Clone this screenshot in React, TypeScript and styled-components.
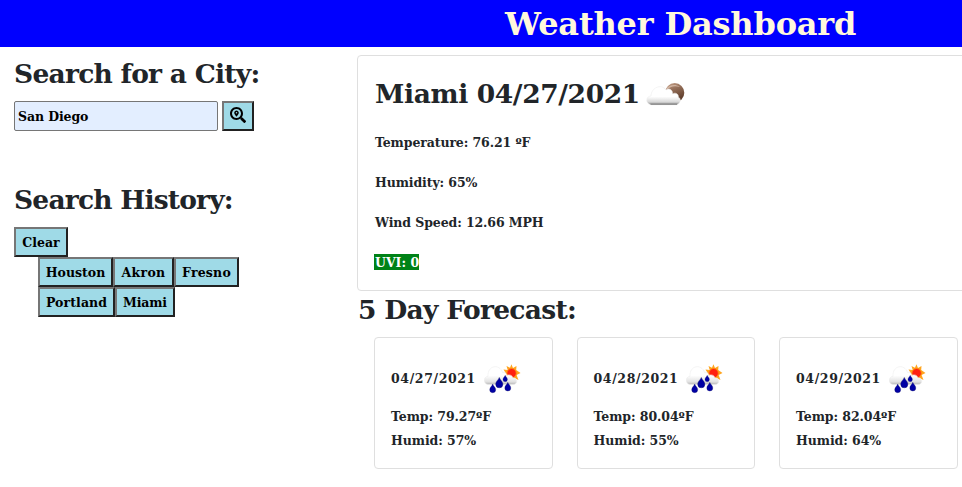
import React from "react";
import styled, { createGlobalStyle } from "styled-components";
import { FaSearchLocation } from "react-icons/fa";

const GlobalStyle = createGlobalStyle`
  *, *::before, *::after { box-sizing: border-box; }
  html, body { margin: 0; overflow: hidden; background: #fff; }
  body, button, input {
    font-family: "DejaVu Serif", "Bitstream Vera Serif", serif;
    font-weight: 700;
    font-size: 12.5px;
    line-height: 24px;
    white-space: nowrap;
  }
  body { color: #212529; }
`;

const Page = styled.div`
  width: 962px;
  height: 487px;
  overflow: hidden;
`;

const Header = styled.header`
  height: 47px;
  background: #0000ff;
  color: #fff8dc;
  padding-left: 505px;
`;

const Title = styled.h1`
  margin: 0;
  font-size: 32px;
  line-height: 48px;
  letter-spacing: -0.18px;
`;

const Columns = styled.div`
  display: flex;
`;

const Sidebar = styled.aside`
  flex: 0 0 357px;
  padding: 8px 0 0 14px;
`;

const Main = styled.main`
  flex: 0 0 641px;
  padding-top: 8px;
`;

const Heading = styled.h2<{ $spacing: number }>`
  margin: 0;
  font-size: 26.5px;
  line-height: 38px;
  letter-spacing: ${(p) => p.$spacing}px;
`;

const SearchForm = styled.div`
  display: flex;
  gap: 4px;
  margin: 8px 0 50px;
`;

const CityInput = styled.input`
  width: 204px;
  height: 30px;
  padding: 1px 3px;
  border: 1px solid #767676;
  border-radius: 2px;
  background: #e3eeff;
  color: #000;
  letter-spacing: -0.1px;
  outline: none;
`;

const Button = styled.button<{ $width: number; $spacing?: number }>`
  display: flex;
  align-items: center;
  justify-content: center;
  flex: none;
  width: ${(p) => p.$width}px;
  height: 30px;
  padding: 1px 0 0;
  border: 2px solid;
  border-color: #767676 #212121 #212121 #767676;
  background: #9fdae7;
  color: #000;
  letter-spacing: ${(p) => p.$spacing ?? 0}px;
`;

const SearchIcon = styled(FaSearchLocation)`
  width: 16px;
  height: 16px;
  margin-top: -3px;
`;

const ClearRow = styled.div`
  margin-top: 8px;
`;

const History = styled.div`
  display: flex;
  flex-wrap: wrap;
  width: 202px;
  margin-left: 24px;
`;

const Card = styled.section`
  border: 1px solid #dfdfdf;
  border-radius: 4px;
  background: #fff;
`;

const CurrentCard = styled(Card)`
  height: 236px;
  padding: 16px 16px 16px 17px;
`;

const CurrentTitle = styled.div`
  display: flex;
  align-items: flex-start;
  height: 46px;
  margin-bottom: 13px;
  padding-top: 3px;
  gap: 8px;
`;

const Reading = styled.p`
  margin: 0 0 16px;
  letter-spacing: -0.1px;
`;

const UvBadge = styled.span`
  display: block;
  width: 45px;
  height: 16px;
  margin: 19px 0 0 -1px;
  padding-left: 1px;
  line-height: 17px;
  background: #008217;
  color: #fff;
`;

const ForecastHeading = styled(Heading)`
  padding-left: 1px;
`;

const Forecast = styled.div`
  display: flex;
  gap: 24px;
  margin: 8px 0 0 17px;
`;

const DayCard = styled(Card)`
  flex: 0 0 178.5px;
  height: 132px;
  padding: 16px;
`;

const DayTitle = styled.div`
  display: flex;
  align-items: center;
  height: 50px;
  margin-bottom: 1px;
  gap: 8px;
  letter-spacing: 0.62px;
`;

const DayReading = styled.div`
  letter-spacing: -0.08px;
`;

const MoonIcon = styled.svg`
  width: 40px;
  height: 26px;
  margin: 7px 0 0 -2px;
`;

const RainIcon = styled.svg`
  width: 38px;
  height: 30px;
`;

function CloudMoon() {
  return (
    <MoonIcon viewBox="0 0 40 26">
      <defs>
        <linearGradient id="moon" x1="0" y1="0" x2="0.4" y2="1">
          <stop offset="0" stopColor="#c9a68e" />
          <stop offset="0.4" stopColor="#96705a" />
          <stop offset="1" stopColor="#5c3b29" />
        </linearGradient>
        <linearGradient id="cloudMoon" x1="0" y1="0" x2="0" y2="1">
          <stop offset="0.55" stopColor="#fff" />
          <stop offset="0.85" stopColor="#d8d8d8" />
          <stop offset="1" stopColor="#888" />
        </linearGradient>
      </defs>
      <circle cx="28.7" cy="10.7" r="9.6" fill="url(#moon)" />
      <path d="M20 7C23 3 29 1.5 34 5C28 3.5 24 4.5 21 8Z" fill="#e3c9b7" opacity=".7" />
      <path d="M5 22.7C-1 22-.2 14 5 14C5 6 15 1 20 8C23 5.5 27 8 26.6 12C29 10 33 12 32.2 15C36 17 34 22.2 30.5 22.7Z" fill="url(#cloudMoon)" stroke="#ececec" strokeWidth=".6" />
      <path d="M4.5 22.2H31" stroke="#7d7d7d" strokeWidth="1" />
    </MoonIcon>
  );
}

const drops: [number, number, number][] = [
  [8.7, 20, 1],
  [15.3, 13.4, 1.2],
  [21.2, 11.2, 0.75],
  [23.8, 18.3, 1],
];

function RainSun({ id }: { id: string }) {
  return (
    <RainIcon viewBox="0 0 38 30">
      <defs>
        <linearGradient id={id} x1="0" y1="0" x2="0" y2="1">
          <stop offset="0.5" stopColor="#fff" />
          <stop offset="0.85" stopColor="#e2e2e2" />
          <stop offset="1" stopColor="#b5b5b5" />
        </linearGradient>
      </defs>
      <path
        d="M27.4.3L29 4L32.5 2L32.2 6L36.5 9L32.6 11L34.5 16L30.5 14L27.5 18L24.5 15L20.5 13.5L22 9.5L19.5 5.5L23.7 6L22.5 2L26 3.7Z"
        fill="#ffa51e"
      />
      <circle cx="27.6" cy="9.2" r="4.7" fill="#ff2010" stroke="#ff8a14" strokeWidth=".9" />
      <path d="M4 20.5C-1.5 19.5-.4 12.5 4 12.3C3.2 1.5 15.5-.8 18.6 8.6C21 8 23 9.5 22.5 11.5C25 10 29 11.5 28.5 13.8C34 13.5 34 20.5 29 20.5Z" fill={`url(#${id})`} stroke="#ececec" strokeWidth=".6" />
      {drops.map(([x, y, s]) => (
        <path
          key={x}
          transform={`translate(${x} ${y}) scale(${s})`}
          d="M0 0C.6 2 3 3.3 3 5.7A3 3 0 0 1-3 5.7C-3 3.3-.6 2 0 0Z"
          fill="#0000a4"
          stroke="#15155f"
          strokeWidth=".3"
        />
      ))}
    </RainIcon>
  );
}

const cities = [
  { name: "Houston", width: 75, spacing: 0 },
  { name: "Akron", width: 61, spacing: 0.35 },
  { name: "Fresno", width: 65, spacing: 0.2 },
  { name: "Portland", width: 77, spacing: 0.1 },
  { name: "Miami", width: 60, spacing: -0.15 },
];

const days = [
  { date: "04/27/2021", temp: "79.27", humid: 57 },
  { date: "04/28/2021", temp: "80.04", humid: 55 },
  { date: "04/29/2021", temp: "82.04", humid: 64 },
];

export default function App() {
  return (
    <Page>
      <GlobalStyle />
      <Header>
        <Title>Weather Dashboard</Title>
      </Header>
      <Columns>
        <Sidebar>
          <Heading $spacing={-0.75}>Search for a City:</Heading>
          <SearchForm>
            <CityInput defaultValue="San Diego" />
            <Button $width={32} aria-label="Search">
              <SearchIcon />
            </Button>
          </SearchForm>
          <Heading $spacing={-0.8}>Search History:</Heading>
          <ClearRow>
            <Button $width={54}>Clear</Button>
          </ClearRow>
          <History>
            {cities.map((c) => (
              <Button key={c.name} $width={c.width} $spacing={c.spacing}>
                {c.name}
              </Button>
            ))}
          </History>
        </Sidebar>
        <Main>
          <CurrentCard>
            <CurrentTitle>
              <Heading $spacing={-0.37}>Miami 04/27/2021</Heading>
              <CloudMoon />
            </CurrentTitle>
            <Reading>Temperature: 76.21 ºF</Reading>
            <Reading>Humidity: 65%</Reading>
            <Reading>Wind Speed: 12.66 MPH</Reading>
            <UvBadge>UVI: 0</UvBadge>
          </CurrentCard>
          <ForecastHeading $spacing={-0.7}>5 Day Forecast:</ForecastHeading>
          <Forecast>
            {days.map((d, i) => (
              <DayCard key={d.date}>
                <DayTitle>
                  {d.date}
                  <RainSun id={`cloud${i}`} />
                </DayTitle>
                <DayReading>Temp: {d.temp}ºF</DayReading>
                <DayReading>Humid: {d.humid}%</DayReading>
              </DayCard>
            ))}
          </Forecast>
        </Main>
      </Columns>
    </Page>
  );
}
